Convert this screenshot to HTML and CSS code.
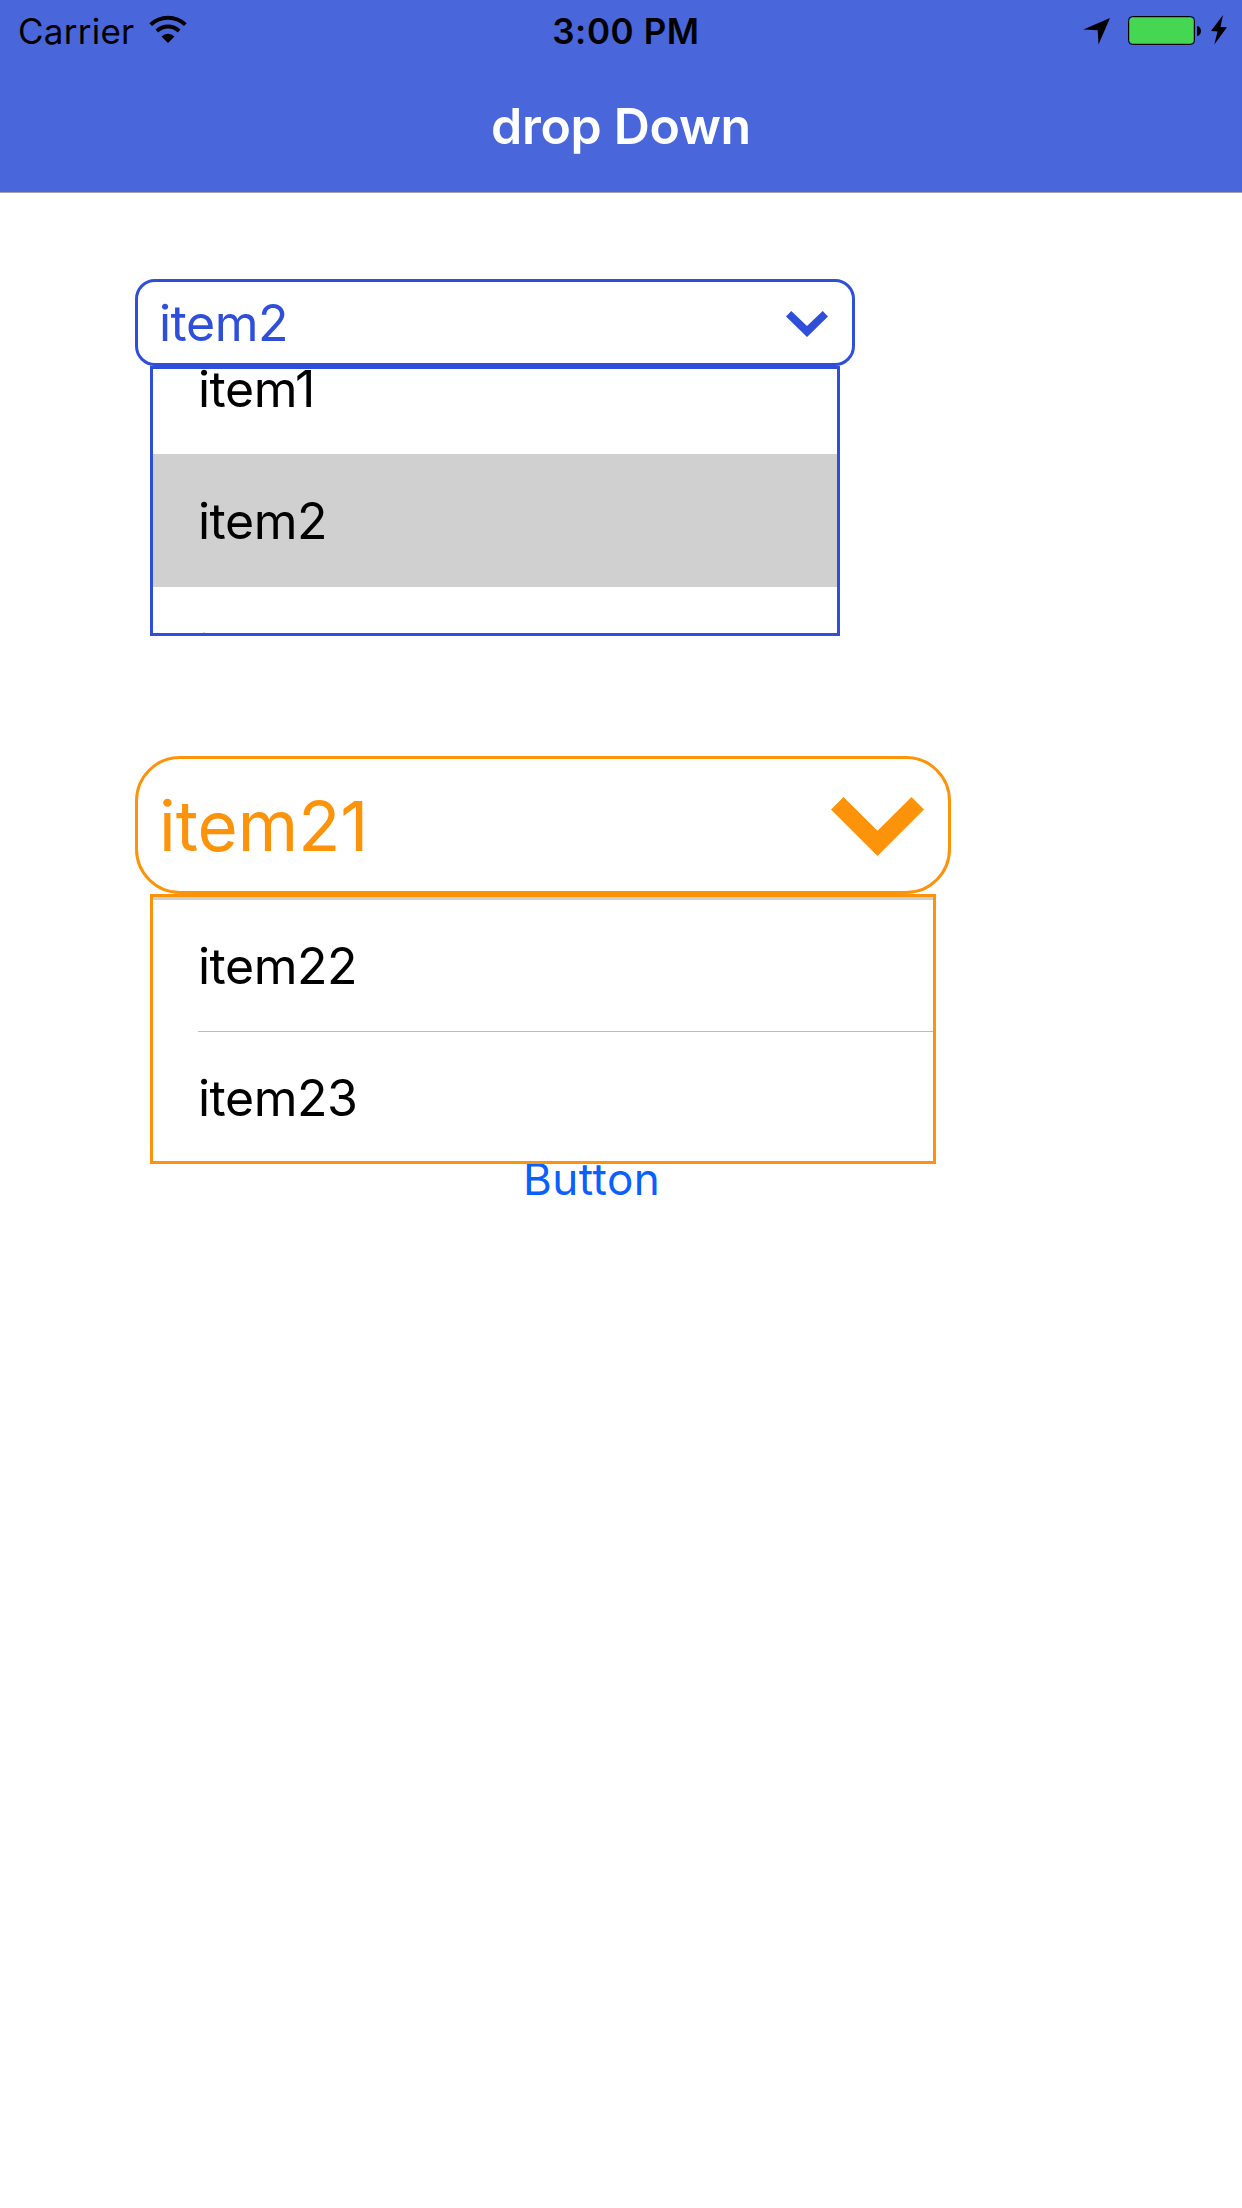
FILE: index.html
```html
<!DOCTYPE html>
<html lang="en">
<head>
<meta charset="utf-8">
<title>drop Down</title>
<link rel="stylesheet" href="styles.css">
</head>
<body>
<header class="header">
  <div class="status">
    <div class="status-left">
      <span class="carrier">Carrier</span>
      <svg class="wifi" viewBox="0 0 38 28" width="38" height="28">
        <path d="M1.7 9.6A25 25 0 0 1 36.3 9.6" fill="none" stroke="#000" stroke-width="4"/>
        <path d="M7.9 16A16.2 16.2 0 0 1 30.1 16" fill="none" stroke="#000" stroke-width="4"/>
        <path d="M12.500 21.4A9.3 9.3 0 0 1 25.500 21.4L19 28Z"/>
      </svg>
    </div>
    <span class="time">3:00 PM</span>
    <div class="status-right">
      <svg viewBox="0 0 146 30" width="146" height="30">
        <path d="M1.3 14.500L28 3L16.500 29.500L15.700 15.300Z"/>
        <rect x="46.500" y="1.500" width="66" height="28" rx="4" fill="none" stroke="#000"/>
        <rect x="47.700" y="2.700" width="63.600" height="25.600" rx="3" fill="#45d652"/>
        <path d="M115 11C120.300 11.500 120.300 20.500 115 21Z"/>
        <path d="M141 0L129 16L135.500 16.500L132.300 29.500L145 12.300L138.500 12Z"/>
      </svg>
    </div>
  </div>
  <h1 class="title">drop Down</h1>
</header>
<main class="content">
  <section class="dropdown dropdown-blue">
    <div class="field">
      <span class="value">item2</span>
      <svg viewBox="0 0 42 29" width="42" height="29"><path d="M0 8.500L5.300 3L21 18L36.700 3L42 8.500L21 29Z" fill="currentColor"/></svg>
    </div>
    <ul class="list">
      <li class="item">item1</li>
      <li class="item selected">item2</li>
      <li class="item">item3</li>
    </ul>
  </section>
  <section class="dropdown dropdown-orange">
    <div class="field">
      <span class="value">item21</span>
      <svg viewBox="0 0 93 62" width="93" height="62"><path d="M0 15.500L12.500 3L46.500 36.700L80.500 3L93 15.500L46.500 62Z" fill="currentColor"/></svg>
    </div>
    <ul class="list">
      <li class="item">item22</li>
      <li class="item">item23</li>
    </ul>
  </section>
  <button class="button" type="button">Button</button>
</main>
</body>
</html>
```
FILE: styles.css
```css
* { box-sizing: border-box; margin: 0; padding: 0; }
body {
  min-height: 2208px;
  background: #fff;
  color: #000;
  font-family: Inter, "Liberation Sans", sans-serif;
}
svg { display: block; flex: none; }
.header {
  height: 193px;
  background: #4966db;
  border-bottom: 1px solid #a3a3b0;
}
.status {
  display: grid;
  grid-template-columns: 1fr auto 1fr;
  height: 60px;
  padding: 0 14px 0 18px;
  font-size: 35px;
  line-height: 62px;
}
.status-left { display: flex; gap: 15px; }
.carrier { letter-spacing: 0.25px; }
.wifi { margin-top: 15px; }
.time { padding-left: 6px; font-weight: 600; letter-spacing: 0.6px; }
.status-right { display: flex; justify-content: flex-end; padding-top: 15px; }
.title {
  color: #fff;
  font-size: 50px;
  font-weight: 600;
  letter-spacing: -0.3px;
  line-height: 132px;
  text-align: center;
}
.content {
  display: flex;
  flex-direction: column;
  align-items: flex-start;
  padding: 86px 135px 0;
}
.field {
  display: flex;
  align-items: center;
  justify-content: space-between;
  border: 3px solid currentColor;
  padding: 0 24px 0 21px;
}
.list {
  position: relative;
  z-index: 1;
  display: flex;
  flex-direction: column;
  height: 270px;
  margin: 0 15px;
  overflow: hidden;
  border: 3px solid currentColor;
  background: #fff;
  list-style: none;
}
.item {
  flex: none;
  height: 132px;
  padding-left: 45px;
  color: #000;
  font-size: 50px;
  letter-spacing: -0.5px;
  line-height: 132px;
}
.selected { background: #d0d0d0; }
.dropdown-blue { width: 720px; color: #2f4fdb; }
.dropdown-blue .field {
  height: 87px;
  border-radius: 20px;
  font-size: 50px;
  letter-spacing: -0.5px;
}
.dropdown-blue .item:first-child { margin-top: -46px; }
.dropdown-blue .selected { margin-top: -1px; height: 133px; line-height: 134px; }
.dropdown-blue .item:last-child { line-height: 130px; }
.dropdown-orange { width: 816px; margin-top: 120px; color: #fc930a; }
.dropdown-orange .field { height: 138px; border-radius: 45px; font-size: 69px; }
.dropdown-orange .value { padding-top: 2px; }
.dropdown-orange .list { padding-top: 3px; box-shadow: inset 0 3px #d0d0d0; }
.dropdown-orange .item:first-child {
  background: linear-gradient(#bcbcbc, #bcbcbc) 45px 100% / 100% 1px no-repeat;
}
.dropdown-orange .item:last-child { height: 129px; }
.button {
  height: 90px;
  margin: -30px 0 0 388px;
  border: 0;
  background: none;
  color: #0a60ff;
  font: 44px/90px Inter, "Liberation Sans", sans-serif;
  letter-spacing: 0.45px;
}
```
